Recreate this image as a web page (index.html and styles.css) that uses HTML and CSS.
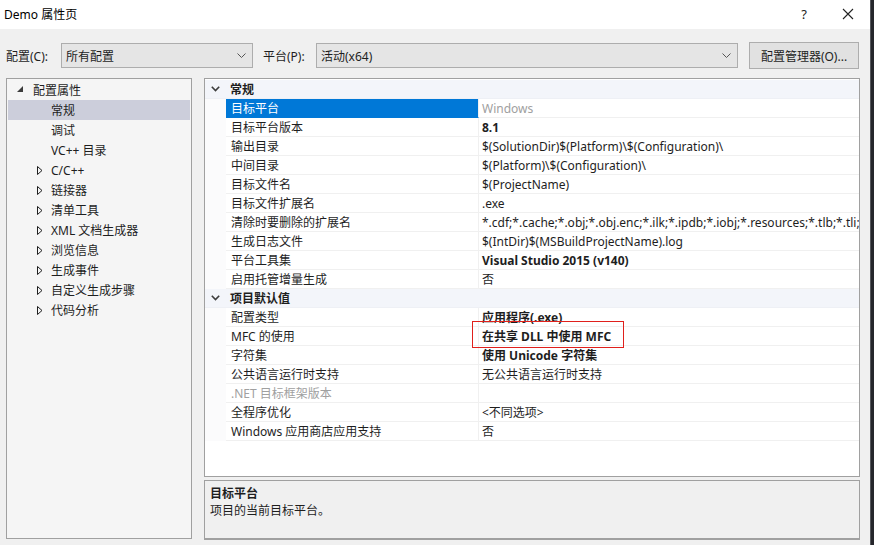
FILE: index.html
```html
<!DOCTYPE html>
<html lang="zh-CN">
<head>
<meta charset="utf-8">
<title>Demo 属性页</title>
<link rel="stylesheet" href="styles.css">
</head>
<body>
<div class="screen">
  <div class="window">
    <div class="titlebar">
      <span class="title">Demo 属性页</span>
      <div class="title-btns">
        <span class="help">?</span>
        <svg class="close" width="12" height="12" viewBox="0 0 12 12"><path d="M1 1 L11 11 M11 1 L1 11" stroke="#222" stroke-width="1.1" fill="none"/></svg>
      </div>
    </div>

    <div class="toolbar">
      <span class="lbl lbl-config">配置(C):</span>
      <div class="combo combo-config"><span>所有配置</span><svg class="chev" width="9" height="5" viewBox="0 0 9 5"><path d="M0.5 0.5 L4.5 4.5 L8.5 0.5" stroke="#555" stroke-width="1" fill="none"/></svg></div>
      <span class="lbl lbl-plat">平台(P):</span>
      <div class="combo combo-plat"><span>活动(x64)</span><svg class="chev" width="9" height="5" viewBox="0 0 9 5"><path d="M0.5 0.5 L4.5 4.5 L8.5 0.5" stroke="#555" stroke-width="1" fill="none"/></svg></div>
      <div class="btn">配置管理器(O)...</div>
    </div>

    <div class="main">
      <div class="tree">
        <div class="trow root"><svg class="exp" width="7" height="7" viewBox="0 0 7 7"><path d="M6 0 L6 6 L0 6 Z" fill="#3c3c3c"/></svg><span>配置属性</span></div>
        <div class="trow leaf sel"><span>常规</span></div>
        <div class="trow leaf"><span>调试</span></div>
        <div class="trow leaf"><span>VC++ 目录</span></div>
        <div class="trow node"><svg class="col" width="6" height="9" viewBox="0 0 6 9"><path d="M0.5 0.5 L5 4.5 L0.5 8.5 Z" fill="none" stroke="#1e1e1e" stroke-width="1"/></svg><span>C/C++</span></div>
        <div class="trow node"><svg class="col" width="6" height="9" viewBox="0 0 6 9"><path d="M0.5 0.5 L5 4.5 L0.5 8.5 Z" fill="none" stroke="#1e1e1e" stroke-width="1"/></svg><span>链接器</span></div>
        <div class="trow node"><svg class="col" width="6" height="9" viewBox="0 0 6 9"><path d="M0.5 0.5 L5 4.5 L0.5 8.5 Z" fill="none" stroke="#1e1e1e" stroke-width="1"/></svg><span>清单工具</span></div>
        <div class="trow node"><svg class="col" width="6" height="9" viewBox="0 0 6 9"><path d="M0.5 0.5 L5 4.5 L0.5 8.5 Z" fill="none" stroke="#1e1e1e" stroke-width="1"/></svg><span>XML 文档生成器</span></div>
        <div class="trow node"><svg class="col" width="6" height="9" viewBox="0 0 6 9"><path d="M0.5 0.5 L5 4.5 L0.5 8.5 Z" fill="none" stroke="#1e1e1e" stroke-width="1"/></svg><span>浏览信息</span></div>
        <div class="trow node"><svg class="col" width="6" height="9" viewBox="0 0 6 9"><path d="M0.5 0.5 L5 4.5 L0.5 8.5 Z" fill="none" stroke="#1e1e1e" stroke-width="1"/></svg><span>生成事件</span></div>
        <div class="trow node"><svg class="col" width="6" height="9" viewBox="0 0 6 9"><path d="M0.5 0.5 L5 4.5 L0.5 8.5 Z" fill="none" stroke="#1e1e1e" stroke-width="1"/></svg><span>自定义生成步骤</span></div>
        <div class="trow node"><svg class="col" width="6" height="9" viewBox="0 0 6 9"><path d="M0.5 0.5 L5 4.5 L0.5 8.5 Z" fill="none" stroke="#1e1e1e" stroke-width="1"/></svg><span>代码分析</span></div>
      </div>

      <div class="right">
        <div class="grid">
          <div class="cat"><svg class="cchev" width="9" height="6" viewBox="0 0 9 6"><path d="M0.8 0.8 L4.5 4.5 L8.2 0.8" stroke="#3c3c3c" stroke-width="1.6" fill="none"/></svg><span>常规</span></div>
          <div class="prow"><div class="gut"></div><div class="pname selname">目标平台</div><div class="pval dim">Windows</div></div>
          <div class="prow"><div class="gut"></div><div class="pname">目标平台版本</div><div class="pval b">8.1</div></div>
          <div class="prow"><div class="gut"></div><div class="pname">输出目录</div><div class="pval">$(SolutionDir)$(Platform)\$(Configuration)\</div></div>
          <div class="prow"><div class="gut"></div><div class="pname">中间目录</div><div class="pval">$(Platform)\$(Configuration)\</div></div>
          <div class="prow"><div class="gut"></div><div class="pname">目标文件名</div><div class="pval">$(ProjectName)</div></div>
          <div class="prow"><div class="gut"></div><div class="pname">目标文件扩展名</div><div class="pval">.exe</div></div>
          <div class="prow"><div class="gut"></div><div class="pname">清除时要删除的扩展名</div><div class="pval">*.cdf;*.cache;*.obj;*.obj.enc;*.ilk;*.ipdb;*.iobj;*.resources;*.tlb;*.tli;*.tlh;*.tmp;*.rsp;*.pgc;*.pgd;*.meta;*.tlog;*.manifest;*.res;*.pch;*.exp;*.idb;*.rep;*.xdc;*.pdb;*_manifest.rc;*.bsc;*.sbr;*.xml;*.metagen;*.bi</div></div>
          <div class="prow"><div class="gut"></div><div class="pname">生成日志文件</div><div class="pval">$(IntDir)$(MSBuildProjectName).log</div></div>
          <div class="prow"><div class="gut"></div><div class="pname">平台工具集</div><div class="pval b">Visual Studio 2015 (v140)</div></div>
          <div class="prow"><div class="gut"></div><div class="pname">启用托管增量生成</div><div class="pval">否</div></div>
          <div class="cat"><svg class="cchev" width="9" height="6" viewBox="0 0 9 6"><path d="M0.8 0.8 L4.5 4.5 L8.2 0.8" stroke="#3c3c3c" stroke-width="1.6" fill="none"/></svg><span>项目默认值</span></div>
          <div class="prow"><div class="gut"></div><div class="pname">配置类型</div><div class="pval b">应用程序(.exe)</div></div>
          <div class="prow"><div class="gut"></div><div class="pname">MFC 的使用</div><div class="pval b mark">在共享 DLL 中使用 MFC<span class="redbox"></span></div></div>
          <div class="prow"><div class="gut"></div><div class="pname">字符集</div><div class="pval b">使用 Unicode 字符集</div></div>
          <div class="prow"><div class="gut"></div><div class="pname">公共语言运行时支持</div><div class="pval">无公共语言运行时支持</div></div>
          <div class="prow"><div class="gut"></div><div class="pname dim">.NET 目标框架版本</div><div class="pval"></div></div>
          <div class="prow"><div class="gut"></div><div class="pname">全程序优化</div><div class="pval">&lt;不同选项&gt;</div></div>
          <div class="prow"><div class="gut"></div><div class="pname">Windows 应用商店应用支持</div><div class="pval">否</div></div>
        </div>
        <div class="desc">
          <div class="desc-title">目标平台</div>
          <div class="desc-text">项目的当前目标平台。</div>
        </div>
      </div>
    </div>
  </div>
  <div class="strip"></div>
</div>
</body>
</html>
```

FILE: styles.css
```css
* { box-sizing: border-box; }
html, body { margin: 0; padding: 0; }
body {
  width: 874px;
  height: 545px;
  overflow: hidden;
  font-family: "Noto Sans", "Noto Sans CJK SC", sans-serif;
  font-size: 12px;
  color: #1e1e1e;
  background: #f0f0f0;
}
.screen { display: flex; width: 874px; height: 545px; }
.window { width: 870px; height: 545px; background: #f0f0f0; display: flex; flex-direction: column; }
.strip { width: 4px; height: 545px; background: #25262b; border-left: 1px solid #55575c; }

.titlebar {
  height: 29px;
  background: #ffffff;
  display: flex;
  align-items: center;
  padding-left: 4px;
  flex: none;
}
.title { font-size: 12px; color: #000; margin-top: -2px; }
.title-btns { margin-left: auto; display: flex; align-items: center; }
.help { font-size: 13px; color: #222; margin-right: 35px; margin-top: -2px; }
.close { margin-right: 16px; margin-top: -1px; }

.toolbar {
  height: 27px;
  margin-top: 13px;
  margin-bottom: 9px;
  display: flex;
  align-items: center;
  flex: none;
}
.lbl { color: #1e1e1e; }
.lbl-config { margin-left: 6px; width: 55px; }
.lbl-plat { margin-left: 10px; width: 53px; }
.combo {
  height: 25px;
  background: #e5e5e5;
  border: 1px solid #adadad;
  display: flex;
  align-items: center;
  padding-left: 4px;
  padding-right: 6px;
}
.combo span { flex: 1; }
.combo-config { width: 192px; }
.combo-plat { width: 422px; }
.btn {
  margin-left: 11px;
  width: 110px;
  height: 27px;
  background: #e1e1e1;
  border: 1px solid #adadad;
  display: flex;
  align-items: center;
  justify-content: center;
}

.main { display: flex; padding-left: 6px; flex: none; }
.tree {
  width: 186px;
  height: 461px;
  background: #f5f5f5;
  border: 1px solid #a0a0a0;
  padding: 1px 1px 0 1px;
}
.trow { height: 20px; display: flex; align-items: center; white-space: nowrap; }
.trow.sel { background: #cccedb; }
.trow.root .exp { margin-left: 9px; margin-right: 9px; margin-top: -1px; }
.trow.leaf span { margin-left: 43px; }
.trow.node .col { margin-left: 29px; margin-right: 8px; }

.right { margin-left: 12px; width: 656px; display: flex; flex-direction: column; }
.grid {
  height: 399px;
  background: #ffffff;
  border: 1px solid #a0a0a0;
  padding-top: 1px;
  overflow: hidden;
}
.cat {
  height: 19px;
  background: #f3f5fa;
  border-bottom: 1px solid #eef0f5;
  display: flex;
  align-items: center;
  font-weight: bold;
}
.cchev { margin-left: 6px; margin-right: 10px; }
.prow { height: 19px; display: flex; }
.gut { width: 21px; flex: none; background: #fbfbfc; }
.pname {
  width: 253px;
  flex: none;
  padding-left: 5px;
  padding-top: 2px;
  line-height: 16px;
  border-bottom: 1px solid #f0f0f0;
  border-right: 1px solid #f0f0f0;
  white-space: nowrap;
}
.pname.selname { background: #0078d7; color: #ffffff; border-bottom-color: #0078d7; }
.pval {
  flex: 1;
  padding-left: 3px;
  padding-top: 2px;
  line-height: 16px;
  border-bottom: 1px solid #f0f0f0;
  white-space: nowrap;
  overflow: hidden;
}
.pval.mark { overflow: visible; position: relative; }
.b { font-weight: bold; }
.dim { color: #a0a0a0; }
.redbox {
  position: absolute;
  left: -7px;
  top: -6px;
  width: 152px;
  height: 27px;
  border: 1px solid #e0201c;
}

.desc {
  margin-top: 3px;
  height: 60px;
  background: #f0f0f0;
  border: 1px solid #a0a0a0;
  border-bottom: 2px solid #a0a0a0;
  padding: 4px 5px;
}
.desc-title { font-weight: bold; line-height: 17px; }
.desc-text { line-height: 17px; }
```
